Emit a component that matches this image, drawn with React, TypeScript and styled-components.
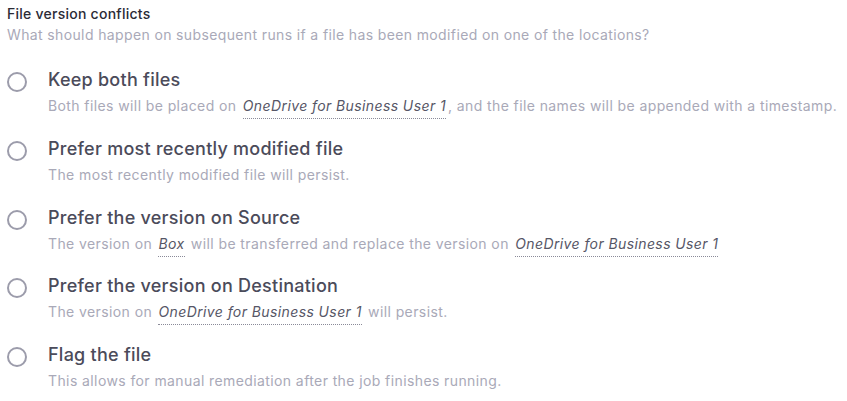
import React from 'react';
import styled, { createGlobalStyle } from 'styled-components';

const GlobalStyle = createGlobalStyle`
  body {
    margin: 0;
    background: #ffffff;
    font-family: Inter, "Noto Sans", sans-serif;
  }
`;

const Section = styled.div`
  padding: 4px 7px 0 7px;
`;

const Title = styled.div`
  font-size: 14px;
  line-height: 20px;
  letter-spacing: 0.25px;
  font-weight: 500;
  color: #2b2b36;
`;

const Subtitle = styled.div`
  font-size: 14px;
  line-height: 20px;
  letter-spacing: 0.37px;
  color: #a9a9b8;
  margin-top: 1px;
`;

const Options = styled.div`
  display: flex;
  flex-direction: column;
  gap: 18.75px;
  margin-top: 23px;
`;

const Option = styled.label`
  display: flex;
  align-items: flex-start;
  gap: 21px;
  cursor: pointer;
`;

const Radio = styled.span`
  flex: none;
  width: 16px;
  height: 16px;
  border: 2px solid #9c9cab;
  border-radius: 50%;
  margin-top: 4px;
`;

const Body = styled.div`
  display: flex;
  flex-direction: column;
  gap: 2px;
`;

const Label = styled.div`
  font-size: 18px;
  line-height: 24px;
  letter-spacing: 0.25px;
  font-weight: 500;
  color: #4b4b5a;
`;

const Desc = styled.div`
  font-size: 14px;
  line-height: 24px;
  letter-spacing: 0.4px;
  color: #a9a9b8;
`;

const Ref = styled.em`
  font-style: italic;
  color: #565666;
  margin: 0 2px;
  padding-bottom: 4px;
  border-bottom: 1px dotted #8a8a98;
`;

const options: { label: string; desc: React.ReactNode }[] = [
  {
    label: 'Keep both files',
    desc: (
      <>
        Both files will be placed on <Ref>OneDrive for Business User 1</Ref>, and the file
        names will be appended with a timestamp.
      </>
    ),
  },
  {
    label: 'Prefer most recently modified file',
    desc: 'The most recently modified file will persist.',
  },
  {
    label: 'Prefer the version on Source',
    desc: (
      <>
        The version on <Ref>Box</Ref> will be transferred and replace the version on{' '}
        <Ref>OneDrive for Business User 1</Ref>
      </>
    ),
  },
  {
    label: 'Prefer the version on Destination',
    desc: (
      <>
        The version on <Ref>OneDrive for Business User 1</Ref> will persist.
      </>
    ),
  },
  {
    label: 'Flag the file',
    desc: 'This allows for manual remediation after the job finishes running.',
  },
];

export default function App() {
  return (
    <>
      <GlobalStyle />
      <Section>
        <Title>File version conflicts</Title>
        <Subtitle>
          What should happen on subsequent runs if a file has been modified on one of the
          locations?
        </Subtitle>
        <Options>
          {options.map((o) => (
            <Option key={o.label}>
              <Radio />
              <Body>
                <Label>{o.label}</Label>
                <Desc>{o.desc}</Desc>
              </Body>
            </Option>
          ))}
        </Options>
      </Section>
    </>
  );
}
